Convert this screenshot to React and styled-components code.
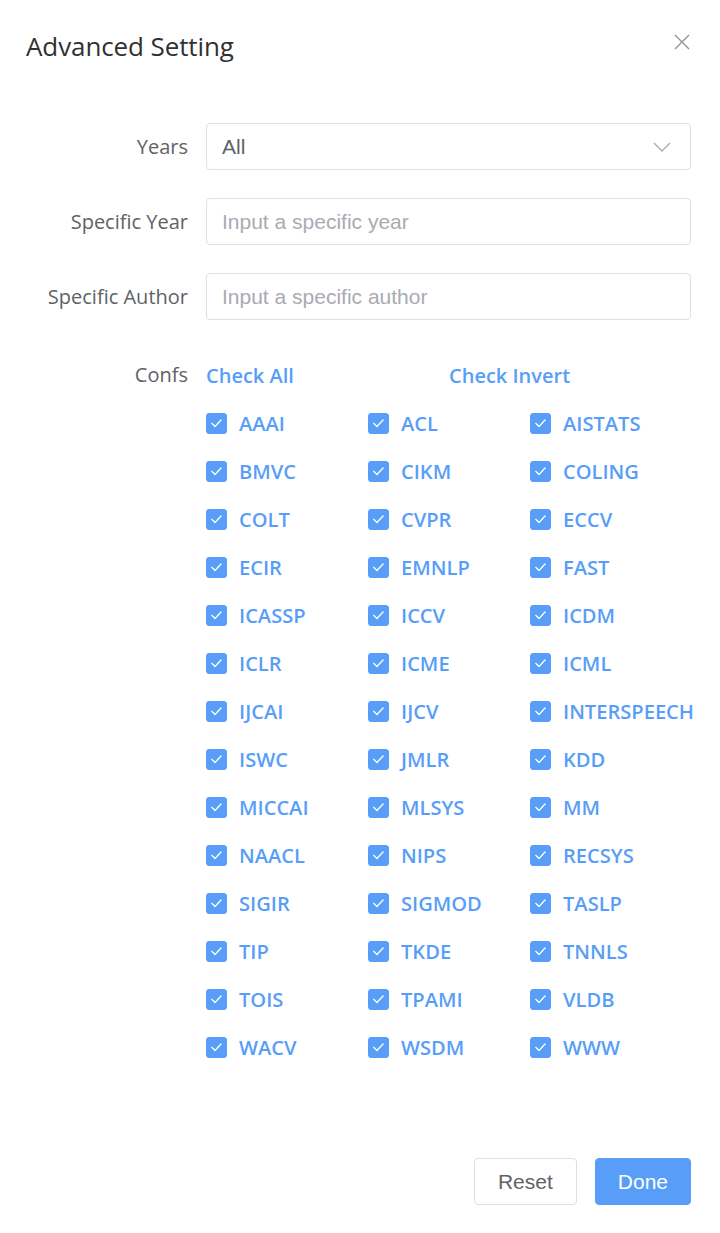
import React, { useState } from 'react';
import styled, { createGlobalStyle } from 'styled-components';

const CONFS = [
  'AAAI', 'ACL', 'AISTATS', 'BMVC', 'CIKM', 'COLING', 'COLT', 'CVPR', 'ECCV',
  'ECIR', 'EMNLP', 'FAST', 'ICASSP', 'ICCV', 'ICDM', 'ICLR', 'ICME', 'ICML',
  'IJCAI', 'IJCV', 'INTERSPEECH', 'ISWC', 'JMLR', 'KDD', 'MICCAI', 'MLSYS', 'MM',
  'NAACL', 'NIPS', 'RECSYS', 'SIGIR', 'SIGMOD', 'TASLP', 'TIP', 'TKDE', 'TNNLS',
  'TOIS', 'TPAMI', 'VLDB', 'WACV', 'WSDM', 'WWW',
];

const GlobalStyle = createGlobalStyle`
  html, body {
    margin: 0;
    padding: 0;
    background: #fff;
  }
  * { box-sizing: border-box; }
`;

export default function App() {
  const [checked, setChecked] = useState(() => CONFS.map(() => true));

  const toggle = (i) => setChecked((c) => c.map((v, j) => (j === i ? !v : v)));

  return (
    <>
      <GlobalStyle />
      <SDialog>
        <SHeader>
          <STitle>Advanced Setting</STitle>
          <SClose aria-label="close">
            <svg width="16" height="16" viewBox="0 0 16 16">
              <path d="M1 1L15 15M15 1L1 15" stroke="#909399" strokeWidth="1.4" fill="none" />
            </svg>
          </SClose>
        </SHeader>

        <SForm>
          <SRow>
            <SLabel>Years</SLabel>
            <SSelect>
              <span>All</span>
              <svg width="18" height="10" viewBox="0 0 18 10">
                <path d="M1 1L9 9L17 1" stroke="#a8abb2" strokeWidth="1.3" fill="none" />
              </svg>
            </SSelect>
          </SRow>
          <SRow>
            <SLabel>Specific Year</SLabel>
            <SInput placeholder="Input a specific year" />
          </SRow>
          <SRow>
            <SLabel>Specific Author</SLabel>
            <SInput placeholder="Input a specific author" />
          </SRow>
          <SRow $top>
            <SLabel $top>Confs</SLabel>
            <SConfs>
              <SActions>
                <SLink onClick={() => setChecked(CONFS.map(() => true))}>Check All</SLink>
                <SLink onClick={() => setChecked((c) => c.map((v) => !v))}>Check Invert</SLink>
              </SActions>
              <SGrid>
                {CONFS.map((name, i) => (
                  <SCheck key={name} onClick={() => toggle(i)}>
                    <SBox $on={checked[i]}>
                      {checked[i] && (
                        <svg width="13" height="10" viewBox="0 0 13 10">
                          <path d="M1.5 5L5 8.5L11.5 1.5" stroke="#fff" strokeWidth="1.3" fill="none" />
                        </svg>
                      )}
                    </SBox>
                    <SCheckText>{name}</SCheckText>
                  </SCheck>
                ))}
              </SGrid>
            </SConfs>
          </SRow>
        </SForm>

        <SFooter>
          <SButton $pad={23}>Reset</SButton>
          <SButton $primary $pad={22}>Done</SButton>
        </SFooter>
      </SDialog>
    </>
  );
}

const SDialog = styled.div`
  width: 720px;
  min-height: 1233px;
  padding: 0 29px 0 26px;
  background: #fff;
`;

const SHeader = styled.div`
  display: flex;
  align-items: center;
  justify-content: space-between;
  height: 92px;
`;

const STitle = styled.h2`
  margin: 0;
  font-family: "Open Sans", "Noto Sans", sans-serif;
  font-weight: 400;
  font-size: 26px;
  color: #303133;
  letter-spacing: -0.1px;
`;

const SClose = styled.button`
  border: 0;
  background: none;
  padding: 0;
  margin: 0 1px 8px 0;
  display: flex;
  cursor: pointer;
`;

const SForm = styled.div`
  padding-top: 31px;
  display: flex;
  flex-direction: column;
  gap: 28px;
`;

const SRow = styled.div`
  display: grid;
  grid-template-columns: 162px 1fr;
  column-gap: 18px;
  align-items: ${(p) => (p.$top ? 'start' : 'center')};
  margin-top: ${(p) => (p.$top ? '13px' : '0')};
`;

const SLabel = styled.label`
  text-align: right;
  font-family: "Open Sans", "Noto Sans", sans-serif;
  font-size: 20px;
  color: #606266;
  line-height: ${(p) => (p.$top ? '28px' : '47px')};
  white-space: nowrap;
`;

const SSelect = styled.div`
  height: 47px;
  border: 1px solid #dcdfe6;
  border-radius: 4px;
  padding: 0 19px 0 15px;
  display: flex;
  align-items: center;
  justify-content: space-between;
  font-family: "Liberation Sans", Arial, sans-serif;
  font-size: 21px;
  color: #606266;
`;

const SInput = styled.input`
  height: 47px;
  width: 100%;
  border: 1px solid #dcdfe6;
  border-radius: 4px;
  padding: 0 15px;
  font-family: "Liberation Sans", Arial, sans-serif;
  font-size: 21px;
  color: #606266;
  outline: none;

  &::placeholder {
    color: #a8abb2;
  }
`;

const SConfs = styled.div`
  display: flex;
  flex-direction: column;
`;

const SActions = styled.div`
  display: grid;
  grid-template-columns: 243px 1fr;
  height: 28px;
  align-items: center;
`;

const SLink = styled.span`
  font-family: "Open Sans", "Noto Sans", sans-serif;
  font-weight: 600;
  font-size: 20px;
  color: #589ef8;
  cursor: pointer;
`;

const SGrid = styled.div`
  margin-top: 22px;
  display: grid;
  grid-template-columns: repeat(3, 162px);
  grid-auto-rows: 48px;
`;

const SCheck = styled.div`
  display: flex;
  align-items: center;
  gap: 12px;
  height: 24px;
  cursor: pointer;
`;

const SBox = styled.span`
  width: 21px;
  height: 21px;
  border-radius: 3px;
  flex-shrink: 0;
  display: flex;
  align-items: center;
  justify-content: center;
  background: ${(p) => (p.$on ? '#589ef8' : '#fff')};
  border: 1px solid ${(p) => (p.$on ? '#589ef8' : '#dcdfe6')};
`;

const SCheckText = styled.span`
  font-family: "Open Sans", "Noto Sans", sans-serif;
  font-weight: 600;
  font-size: 20.1px;
  color: #589ef8;
  white-space: nowrap;
`;

const SFooter = styled.div`
  display: flex;
  justify-content: flex-end;
  gap: 18px;
  margin-top: 75px;
`;

const SButton = styled.button`
  height: 47px;
  padding: 0 ${(p) => p.$pad}px;
  border-radius: 4px;
  font-family: "Liberation Sans", Arial, sans-serif;
  font-size: 21px;
  cursor: pointer;
  border: 1px solid ${(p) => (p.$primary ? '#589ef8' : '#dcdfe6')};
  background: ${(p) => (p.$primary ? '#589ef8' : '#fff')};
  color: ${(p) => (p.$primary ? '#fff' : '#606266')};
`;
